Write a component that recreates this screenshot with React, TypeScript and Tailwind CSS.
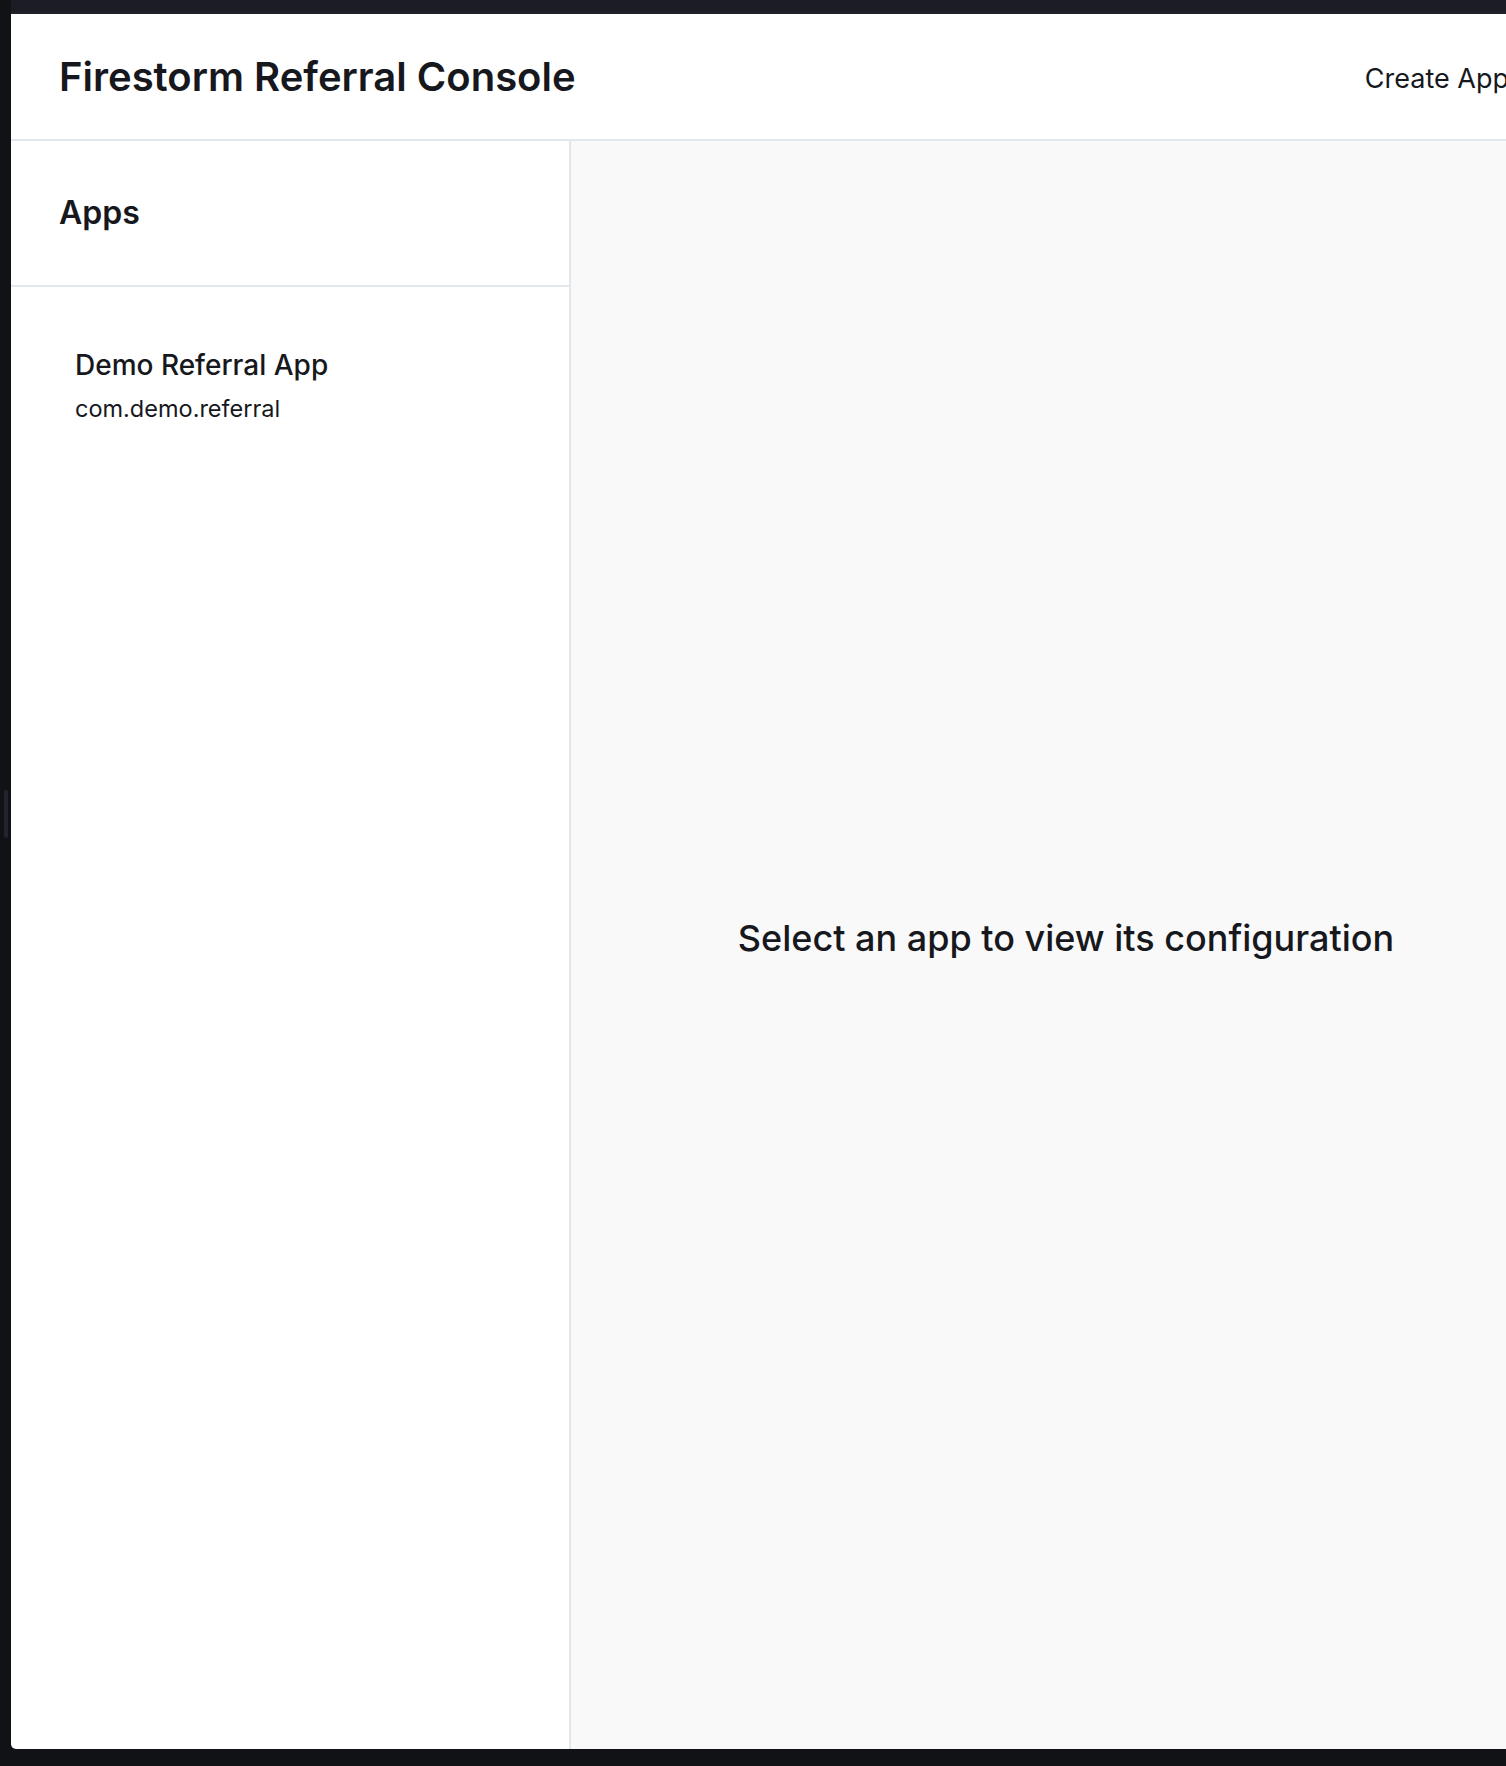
import React from 'react';

const apps = [{ name: 'Demo Referral App', bundleId: 'com.demo.referral' }];

export default function App() {
  return (
    <div
      className="relative h-[1766px] w-full overflow-hidden bg-[#111216] text-[#16181d]"
      style={{ fontFamily: 'Inter, "Noto Sans", sans-serif' }}
    >
      {/* scroll handle on the dark edge */}
      <div className="absolute left-[4px] top-[790px] h-[48px] w-[4px] rounded-full bg-[#23242d]" />

      <div className="ml-[11px] flex h-[1749px] flex-col">
        <div className="h-[14px] shrink-0 border-b-2 border-[#202129] bg-[#1b1c24]" />

        <div className="flex w-[1550px] flex-1 flex-col overflow-hidden rounded-b-[5px] bg-white">
          <header className="flex h-[127px] shrink-0 items-center justify-between border-b-2 border-[#e1e7ec] pl-[48px] pr-[36px]">
            <h1 className="text-[40px] font-semibold">Firestorm Referral Console</h1>
            <button className="mt-[5px] px-4 py-2 text-[27px] font-normal">Create App</button>
          </header>

          <div className="flex flex-1">
            <aside className="flex w-[560px] shrink-0 flex-col border-r-2 border-[#e1e7ec]">
              <div className="flex h-[146px] items-center border-b-2 border-[#e1e7ec] px-[48px]">
                <h2 className="text-[32px] font-semibold">Apps</h2>
              </div>
              <ul className="pt-[59px]">
                {apps.map((app) => (
                  <li key={app.bundleId} className="cursor-pointer px-[64px]">
                    <div className="text-[28px] leading-[39px] font-medium">{app.name}</div>
                    <div className="mt-[7px] text-[23.5px] leading-[34px]">{app.bundleId}</div>
                  </li>
                ))}
              </ul>
            </aside>

            <main className="flex flex-1 items-center justify-center bg-[#f9f9f9] pb-[14px]">
              <p className="text-[36px] font-medium">Select an app to view its configuration</p>
            </main>
          </div>
        </div>
      </div>
    </div>
  );
}
